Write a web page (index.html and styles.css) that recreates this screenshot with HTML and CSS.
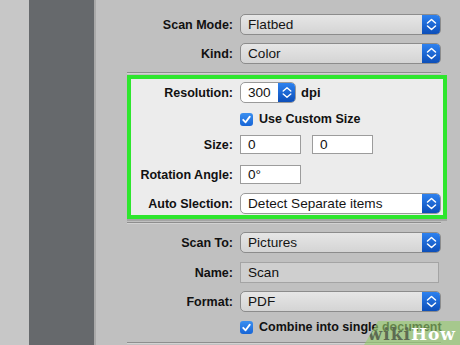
FILE: index.html
```html
<!DOCTYPE html>
<html>
<head>
<meta charset="utf-8">
<link rel="stylesheet" href="styles.css">
</head>
<body>
<div class="screen">
  <div class="edge"></div>
  <div class="sidebar"></div>
  <div class="main">
    <div class="form">
      <div class="row">
        <div class="lbl">Scan Mode:</div>
        <div class="select wide"><span class="val">Flatbed</span><span class="arrow"><svg viewBox="0 0 19 21" width="19" height="21"><polyline points="5.5,9 9.5,5.5 13.5,9"/><polyline points="5.5,12 9.5,15.5 13.5,12"/></svg></span></div>
      </div>
      <div class="row gap8">
        <div class="lbl">Kind:</div>
        <div class="select wide"><span class="val">Color</span><span class="arrow"><svg viewBox="0 0 19 21" width="19" height="21"><polyline points="5.5,9 9.5,5.5 13.5,9"/><polyline points="5.5,12 9.5,15.5 13.5,12"/></svg></span></div>
      </div>
      <div class="sep top"></div>
      <div class="box">
        <div class="row first">
          <div class="lbl">Resolution:</div>
          <div class="select small white"><span class="val">300</span><span class="arrow"><svg viewBox="0 0 19 21" width="18" height="21"><polyline points="5.5,9 9.5,5.5 13.5,9"/><polyline points="5.5,12 9.5,15.5 13.5,12"/></svg></span></div>
          <span class="unit">dpi</span>
        </div>
        <div class="row check-row mt9">
          <div class="lbl"></div>
          <span class="check"><svg viewBox="0 0 13 13" width="13" height="13"><polyline points="3.2,6.8 5.6,9.3 9.8,3.6"/></svg></span>
          <span class="check-text">Use Custom Size</span>
        </div>
        <div class="row in-row mt9">
          <div class="lbl">Size:</div>
          <div class="field">0</div>
          <div class="field second">0</div>
        </div>
        <div class="row in-row mt11">
          <div class="lbl">Rotation Angle:</div>
          <div class="field">0°</div>
        </div>
        <div class="row mt9">
          <div class="lbl">Auto Slection:</div>
          <div class="select wide white"><span class="val">Detect Separate items</span><span class="arrow"><svg viewBox="0 0 19 21" width="19" height="21"><polyline points="5.5,9 9.5,5.5 13.5,9"/><polyline points="5.5,12 9.5,15.5 13.5,12"/></svg></span></div>
        </div>
      </div>
      <div class="sep mid"></div>
      <div class="row mt9">
        <div class="lbl">Scan To:</div>
        <div class="select wide"><span class="val">Pictures</span><span class="arrow"><svg viewBox="0 0 19 21" width="19" height="21"><polyline points="5.5,9 9.5,5.5 13.5,9"/><polyline points="5.5,12 9.5,15.5 13.5,12"/></svg></span></div>
      </div>
      <div class="row mt9">
        <div class="lbl">Name:</div>
        <div class="namefield">Scan</div>
      </div>
      <div class="row gap8">
        <div class="lbl">Format:</div>
        <div class="select wide"><span class="val">PDF</span><span class="arrow"><svg viewBox="0 0 19 21" width="19" height="21"><polyline points="5.5,9 9.5,5.5 13.5,9"/><polyline points="5.5,12 9.5,15.5 13.5,12"/></svg></span></div>
      </div>
      <div class="row check-row mt8">
        <div class="lbl"></div>
        <span class="check"><svg viewBox="0 0 13 13" width="13" height="13"><polyline points="3.2,6.8 5.6,9.3 9.8,3.6"/></svg></span>
        <span class="check-text">Combine into single document</span>
      </div>
      <div class="sep bottom"></div>
    </div>
  </div>
  <div class="logo"><span class="wiki">wiki</span><span class="how">How</span></div>
</div>
</body>
</html>
```

FILE: styles.css
```css
html, body {
  margin: 0;
  padding: 0;
}
body {
  width: 460px;
  height: 345px;
  overflow: hidden;
  font-family: "Liberation Sans", Arial, sans-serif;
  color: #111;
}
.screen {
  position: relative;
  display: flex;
  width: 460px;
  height: 345px;
  overflow: hidden;
  background: #c0c0c0;
}
.edge {
  width: 29px;
  background: #c7c7c7;
}
.sidebar {
  width: 65px;
  background: #66696c;
  border-right: 2px solid #a9a9a9;
}
.main {
  flex: 1;
  padding-top: 14px;
  padding-left: 31px;
  background: #c0c0c0;
}
.form {
  width: 320px;
  display: flex;
  flex-direction: column;
}
.row {
  display: flex;
  align-items: center;
  height: 21px;
}
.gap8 { margin-top: 8px; }
.mt8 { margin-top: 8px; }
.mt9 { margin-top: 9px; }
.mt11 { margin-top: 11px; }
.lbl {
  width: 106px;
  margin-right: 7px;
  text-align: right;
  font-weight: bold;
  font-size: 12.5px;
  flex: none;
}
.box .lbl {
  width: 102px;
}
.select {
  display: flex;
  height: 19px;
  border: 1px solid #8c8c8c;
  border-radius: 5px;
  background: linear-gradient(#e6e6e6, #d4d4d4);
  overflow: hidden;
  box-sizing: content-box;
}
.select.white {
  background: #ffffff;
  border-color: #9a9a9a;
}
.select.wide {
  width: 199px;
}
.select.small {
  width: 54px;
}
.val {
  flex: 1;
  padding-left: 7px;
  font-size: 13.6px;
  line-height: 19px;
  color: #141414;
  white-space: nowrap;
}
.arrow {
  width: 19px;
  height: 21px;
  margin: -1px -1px -1px 0;
  background: linear-gradient(#2f84f2, #0b4cb6);
  border-radius: 0 5px 5px 0;
  display: flex;
  align-items: center;
  justify-content: center;
}
.select.small .arrow {
  width: 18px;
}
.arrow svg polyline {
  fill: none;
  stroke: #ffffff;
  stroke-width: 1.5;
  stroke-linecap: round;
  stroke-linejoin: round;
}
.unit {
  margin-left: 5px;
  font-weight: bold;
  font-size: 13px;
}
.sep {
  width: 314px;
  height: 1px;
  background: #8e8e8e;
  box-shadow: 0 1px 0 #d2d2d2;
}
.sep.top { margin-top: 8px; }
.sep.mid { margin-top: 3px; }
.sep.bottom { margin-top: 8px; }
.box {
  margin-top: 2px;
  border: 4px solid #2ee62e;
  background: #ececec;
  padding: 3px 2px 1px 0;
  display: flex;
  flex-direction: column;
  box-shadow: 0 2px 0 #a4a4a4;
}
.check-row {
  height: 14px;
}
.check {
  width: 13px;
  height: 13px;
  border-radius: 3px;
  background: linear-gradient(#3a8ff0, #1765d6);
  display: flex;
  flex: none;
}
.check svg polyline {
  fill: none;
  stroke: #ffffff;
  stroke-width: 1.8;
  stroke-linecap: round;
  stroke-linejoin: round;
}
.check-text {
  margin-left: 6px;
  font-weight: bold;
  font-size: 12.5px;
  white-space: nowrap;
}
.in-row {
  height: 19px;
}
.field {
  height: 17px;
  border: 1px solid #9c9c9c;
  background: #ffffff;
  padding-left: 7px;
  box-sizing: content-box;
  width: 52px;
  font-size: 13.6px;
  line-height: 17px;
}
.field.second {
  margin-left: 11px;
}
.namefield {
  width: 190px;
  height: 19px;
  border: 1px solid #a4a4a4;
  background: #cfcfcf;
  padding-left: 7px;
  font-size: 13.6px;
  line-height: 19px;
}
.logo {
  position: absolute;
  right: 0;
  bottom: 0;
  width: 96px;
  height: 24px;
  background: rgba(150, 205, 110, 0.62);
  clip-path: polygon(14px 0, 100% 0, 100% 100%, 0 100%);
  display: flex;
  align-items: flex-end;
  justify-content: flex-end;
  padding-right: 4px;
  box-sizing: border-box;
  font-family: "DejaVu Serif", "Liberation Serif", serif;
  font-weight: bold;
  font-size: 17px;
  line-height: 22px;
  letter-spacing: 1px;
}
.wiki {
  color: #5d6b52;
}
.how {
  color: #ffffff;
}
```
